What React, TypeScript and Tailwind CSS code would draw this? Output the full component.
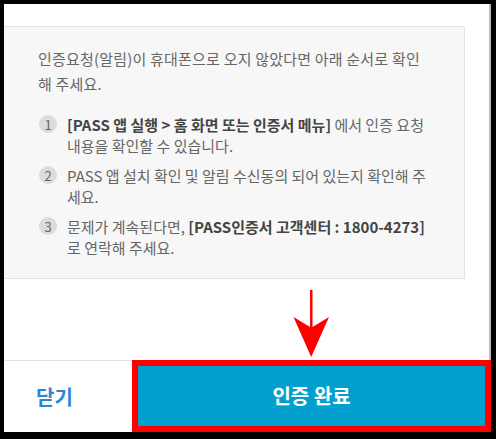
const steps = [
  {
    no: 1,
    lines: [
      <>
        <b className="font-bold text-[#444]">[PASS 앱 실행 &gt; 홈 화면 또는 인증서 메뉴]</b> 에서 인증 요청
      </>,
      <>내용을 확인할 수 있습니다.</>,
    ],
  },
  {
    no: 2,
    lines: [<>PASS 앱 설치 확인 및 알림 수신동의 되어 있는지 확인해 주</>, <>세요.</>],
  },
  {
    no: 3,
    lines: [
      <>
        문제가 계속된다면, <b className="font-bold text-[#444]">[PASS인증서 고객센터 : 1800-4273]</b>
      </>,
      <>로 연락해 주세요.</>,
    ],
  },
];

function DownArrow() {
  return (
    <svg
      className="absolute left-[293px] top-[290px]"
      width="36"
      height="67"
      viewBox="0 0 36 67"
    >
      <path d="M17 0 L19.5 0 L19.5 37 L36 27 L18.2 67 L0.5 27 L17 37 Z" fill="#ff0000" />
    </svg>
  );
}

export default function App() {
  return (
    <div
      className="relative h-[439px] w-[496px] bg-black pb-[7px] pl-[4px] pr-[5px] pt-[4px]"
      style={{ fontFamily: '"Noto Sans CJK KR", "Noto Sans", sans-serif' }}
    >
      <div className="flex h-full flex-col bg-white">
        <div className="h-[356px] border-r-2 border-[#bdbdbd] pt-[22px]">
          <div className="mr-[24px] border-y border-r border-[#e3e3e3] bg-[#f7f7f7] pb-[20px] pl-[34px] pt-[19px] text-[15px] text-[#666]">
            <p className="whitespace-nowrap leading-[25px] tracking-[0.2px]">
              인증요청(알림)이 휴대폰으로 오지 않았다면 아래 순서로 확인
              <br />
              해 주세요.
            </p>
            <ul className="mt-[18px] flex flex-col gap-[9px]">
              {steps.map((s) => (
                <li key={s.no} className="flex items-start">
                  <span className="ml-[1px] mr-[10px] mt-[1px] flex h-[18px] w-[18px] shrink-0 items-center justify-center rounded-full bg-[#dcdcdc] text-[13px] leading-none text-[#666]">
                    {s.no}
                  </span>
                  <p className="whitespace-nowrap leading-[21px]">
                    {s.lines[0]}
                    <br />
                    {s.lines[1]}
                  </p>
                </li>
              ))}
            </ul>
          </div>
        </div>
        <div className="flex h-[72px]">
          <div className="flex w-[128px] items-center border-t border-[#e2e2e2] pl-[32px] text-[20px] font-bold text-[#2a86d6]">
            닫기
          </div>
          <div className="flex flex-1 items-center justify-center border-[6px] border-[#ff0000] bg-[#03a0cf] text-[20px] font-bold text-white">
            인증 완료
          </div>
        </div>
      </div>
      <DownArrow />
    </div>
  );
}
